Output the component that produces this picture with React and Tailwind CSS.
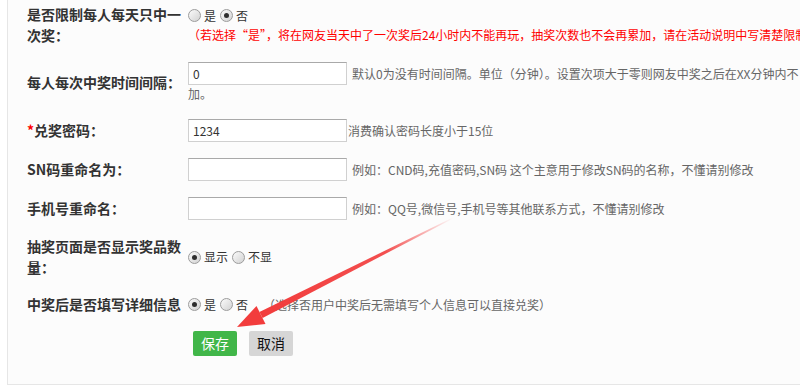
import React from 'react';

const Radio = ({ checked, label }) => (
  <span className="inline-flex items-center mr-[4px]">
    <span className="relative w-[13px] h-[13px] rounded-full border border-[#9c9c9c] bg-gradient-to-br from-[#fbfbfb] to-[#d2d2d2] mr-[3px] flex items-center justify-center">
      {checked && <span className="w-[5px] h-[5px] rounded-full bg-[#2e2e2e]" />}
    </span>
    <span className="text-[12px] text-[#333]">{label}</span>
  </span>
);

const Row = ({ label, required, children }) => (
  <div className="flex items-center py-2">
    <div className="w-[180px] shrink-0 pl-[19px] pr-[5px] text-[14px] font-bold leading-[21px] text-[#333]">
      {required && <span className="text-[#f00]">*</span>}
      {label}
    </div>
    <div className="flex-1 min-w-0">{children}</div>
  </div>
);

const TextInput = ({ value }) => (
  <input
    defaultValue={value}
    className="w-[159px] h-[23px] border border-[#d0d0d0] border-t-[#a9a9a9] bg-white px-[4px] text-[12px] text-[#333] outline-none"
  />
);

const Help = ({ children, className = '' }) => (
  <span className={`text-[12px] text-[#666] whitespace-nowrap ${className}`}>{children}</span>
);

export default function App() {
  return (
    <div
      className="relative w-[800px] h-[392px] overflow-hidden bg-white"
      style={{ fontFamily: '"Noto Sans CJK SC", "Noto Sans", sans-serif' }}
    >
      <div className="ml-[7px] w-[900px] border-l border-b border-[#e6e6e6] bg-[#fcfcfc] pb-[28px]">
        <div className="-mt-[4px]">
          <Row label="是否限制每人每天只中一次奖：">
            <div className="flex items-center h-[19px]">
              <Radio label="是" />
              <Radio checked label="否" />
            </div>
            <div className="text-[12px] leading-[19px] text-[#f00] whitespace-nowrap">
              （若选择“是”，将在网友当天中了一次奖后24小时内不能再玩，抽奖次数也不会再累加，请在活动说明中写清楚限制）
            </div>
          </Row>

          <Row label="每人每次中奖时间间隔：">
            <div className="flex items-center">
              <TextInput value="0" />
              <Help className="ml-[5px]">默认0为没有时间间隔。单位（分钟）。设置次项大于零则网友中奖之后在XX分钟内不</Help>
            </div>
            <div className="text-[12px] leading-[18px] text-[#666]">加。</div>
          </Row>

          <Row label="兑奖密码：" required>
            <div className="flex items-center">
              <TextInput value="1234" />
              <Help className="ml-[1px]">消费确认密码长度小于15位</Help>
            </div>
          </Row>

          <Row label="SN码重命名为：">
            <div className="flex items-center">
              <TextInput value="" />
              <Help className="ml-[5px]">例如：CND码,充值密码,SN码 这个主意用于修改SN码的名称，不懂请别修改</Help>
            </div>
          </Row>

          <Row label="手机号重命名：">
            <div className="flex items-center">
              <TextInput value="" />
              <Help className="ml-[5px]">例如：QQ号,微信号,手机号等其他联系方式，不懂请别修改</Help>
            </div>
          </Row>

          <Row label="抽奖页面是否显示奖品数量：">
            <div className="flex items-center">
              <Radio checked label="显示" />
              <Radio label="不显" />
            </div>
          </Row>

          <Row label="中奖后是否填写详细信息">
            <div className="flex items-center">
              <Radio checked label="是" />
              <Radio label="否" />
              <Help className="ml-[11px]">（选择否用户中奖后无需填写个人信息可以直接兑奖）</Help>
            </div>
          </Row>
        </div>

        <div className="flex gap-[12px] pl-[185px] mt-[8px]">
          <button className="w-[44px] h-[25px] rounded-[2px] bg-[#41b649] text-white text-[14px] leading-[25px]">保存</button>
          <button className="w-[44px] h-[25px] rounded-[2px] bg-[#d6d6d6] text-[#111] text-[14px] leading-[25px]">取消</button>
        </div>
      </div>

      <svg className="absolute inset-0 pointer-events-none" width="800" height="392" viewBox="0 0 800 392">
        <defs>
          <linearGradient id="shaft" gradientUnits="userSpaceOnUse" x1="453" y1="218" x2="261" y2="315">
            <stop offset="0" stopColor="#f23c3c" stopOpacity="0" />
            <stop offset="0.35" stopColor="#f23c3c" stopOpacity="0.9" />
            <stop offset="1" stopColor="#f23c3c" stopOpacity="1" />
          </linearGradient>
        </defs>
        <polygon points="453.2,218.4 452.8,217.6 259.4,311.9 262.6,318.1" fill="url(#shaft)" />
        <polygon points="237,327 256.5,306 265.5,324" fill="#f23c3c" />
      </svg>
    </div>
  );
}
